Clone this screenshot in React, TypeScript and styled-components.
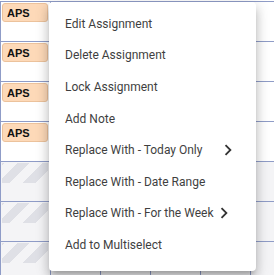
import React from "react";
import styled, { createGlobalStyle } from "styled-components";

const GlobalStyle = createGlobalStyle`
  html, body {
    margin: 0;
    padding: 0;
    background: #ffffff;
    overflow: hidden;
  }
  body {
    font-family: Roboto, "Liberation Sans", sans-serif;
  }
`;

const Page = styled.div`
  position: relative;
  width: 274px;
  height: 275px;
  overflow: hidden;
  padding-top: 1px;
  box-sizing: border-box;
`;

const Grid = styled.div`
  display: grid;
  grid-template-columns: repeat(6, 50px);
  grid-auto-rows: 40px;
`;

const Cell = styled.div<{ blocked?: boolean }>`
  box-sizing: border-box;
  border-top: 1px solid #8f9cc7;
  border-left: 1px solid #8f9cc7;
  background: ${(p) => (p.blocked ? "#f4f4f6" : "#ffffff")};
  padding: 1px 1px 0 1px;
`;

const Badge = styled.div`
  box-sizing: border-box;
  width: 46px;
  height: 19px;
  background: #fdd9b8;
  border: 1px solid #ecc29c;
  border-radius: 3px;
  padding: 3px 0 0 4px;
  font-family: "Liberation Sans", Arial, sans-serif;
  font-weight: bold;
  font-size: 11px;
  line-height: 12px;
  color: #111;
`;

const Hatch = styled.div`
  width: 46px;
  height: 20px;
  background: repeating-linear-gradient(
    -45deg,
    #f4f4f6 0px,
    #f4f4f6 9px,
    #dfe0e6 9px,
    #dfe0e6 18px
  );
`;

const Menu = styled.ul`
  position: absolute;
  left: 49px;
  top: 2px;
  width: 207px;
  height: 269px;
  margin: 0;
  padding: 6px 0;
  box-sizing: border-box;
  list-style: none;
  background: #ffffff;
  border-radius: 4px;
  box-shadow: 0px 5px 5px -3px rgba(0, 0, 0, 0.2),
    0px 8px 10px 1px rgba(0, 0, 0, 0.14), 0px 3px 14px 2px rgba(0, 0, 0, 0.12);
`;

const Item = styled.li`
  display: flex;
  align-items: center;
  height: 31.6px;
  padding: 0 16px;
  font-family: Roboto, "Liberation Sans", sans-serif;
  font-size: 12px;
  color: #3f3f3f;
  white-space: nowrap;
`;

const Chevron = styled.svg<{ gap: number }>`
  width: 22px;
  height: 22px;
  margin-left: ${(p) => p.gap}px;
  fill: #333333;
`;

const rows = ["aps", "aps", "aps", "aps", "blocked", "blocked", "blocked"];

const items: { label: string; sub?: number }[] = [
  { label: "Edit Assignment" },
  { label: "Delete Assignment" },
  { label: "Lock Assignment" },
  { label: "Add Note" },
  { label: "Replace With - Today Only", sub: 15 },
  { label: "Replace With - Date Range" },
  { label: "Replace With - For the Week", sub: 0 },
  { label: "Add to Multiselect" },
];

function App() {
  return (
    <Page>
      <GlobalStyle />
      <Grid>
        {rows.map((kind, r) =>
          Array.from({ length: 6 }).map((_, c) => (
            <Cell key={`${r}-${c}`} blocked={kind === "blocked"}>
              {c === 0 && kind === "aps" ? <Badge>APS</Badge> : null}
              {c === 0 && kind === "blocked" ? <Hatch /> : null}
            </Cell>
          ))
        )}
      </Grid>
      <Menu>
        {items.map((it) => (
          <Item key={it.label}>
            {it.label}
            {it.sub !== undefined ? (
              <Chevron gap={it.sub} viewBox="0 0 24 24">
                <path d="M10 6 8.59 7.41 13.17 12l-4.58 4.59L10 18l6-6z" />
              </Chevron>
            ) : null}
          </Item>
        ))}
      </Menu>
    </Page>
  );
}

export default App;
